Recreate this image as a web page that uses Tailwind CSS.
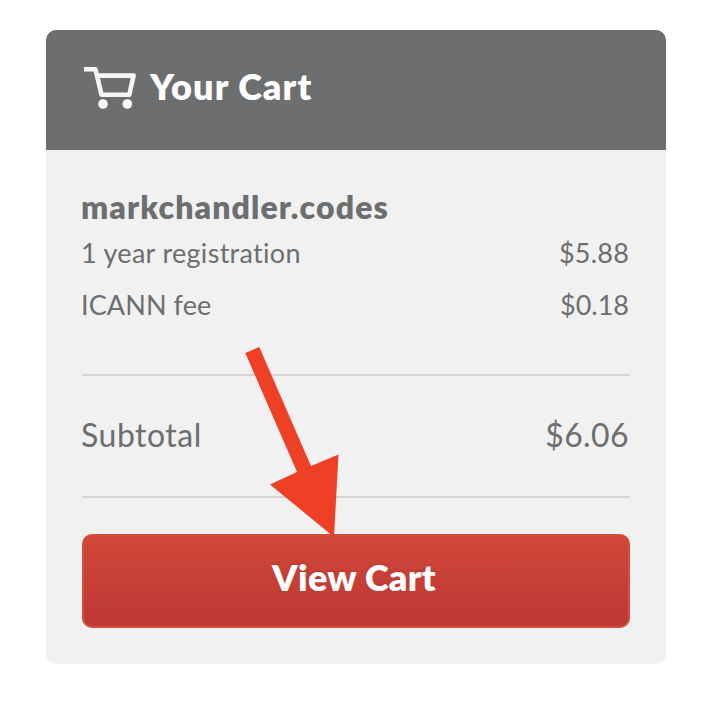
<!DOCTYPE html>
<html lang="en">
<head>
<meta charset="utf-8">
<title>Your Cart</title>
<script src="https://cdn.jsdelivr.net/npm/@tailwindcss/browser@4"></script>
</head>
<body class="bg-white font-['Lato',sans-serif] text-[#6d6e70] [font-variant-ligatures:none]">
<main class="h-[714px] w-[710px] overflow-hidden pt-[30px] pl-[46px]">
  <section class="relative h-[634px] w-[620px] overflow-hidden rounded-[10px] bg-[#f1f1f1]">
    <header class="flex h-[120px] items-start bg-[#6d6e70] pt-9 pl-[37px] text-white">
      <svg class="h-[43px] w-[54px] shrink-0 blur-[0.6px]" viewBox="0 0 54 43" fill="none" stroke="#fff" stroke-opacity=".94" stroke-width="4.6">
        <path d="M1 3.200H12.500L18.500 28.700H46.300L50.600 9.600H14.500" stroke-linejoin="round"/>
        <circle cx="20" cy="38" r="4.800" fill="#fff" stroke="none"/>
        <circle cx="44.3" cy="38" r="4.800" fill="#fff" stroke="none"/>
      </svg>
      <h1 class="ml-[13px] text-[36px] leading-[41px] font-extrabold tracking-[1.100px] whitespace-nowrap">Your Cart</h1>
    </header>
    <div class="px-9 pt-9">
      <h2 class="-ml-px h-10 text-[32px] leading-[42px] font-extrabold tracking-[1.100px]"><span>markchandler.codes</span></h2>
      <div class="-ml-px mr-px flex h-[52px] justify-between text-[27px] leading-[53px]"><span class="tracking-[0.3px]">1 year registration</span><span class="tracking-[0.2px]">$5.88</span></div>
      <div class="-ml-px mr-px flex h-[52px] justify-between text-[27px] leading-[53px]"><span class="tracking-[0.1px]">ICANN fee</span><span>$0.18</span></div>
      <div class="mt-11 flex h-[124px] justify-between border-y-2 border-[#d4d4d4] text-[32px] leading-[118px]"><span class="-ml-px tracking-[0.5px]">Subtotal</span><span class="mr-px tracking-[0.4px]">$6.06</span></div>
      <button class="mt-9 block h-[94px] w-full rounded-[10px] border-2 border-[#d24e3a] bg-linear-to-b from-[#d04838] to-[#be3735] pr-1 pb-2 text-[36px] leading-[80px] font-extrabold tracking-[0.3px] text-white [text-shadow:0_-1px_2px_#a82d2b80]">View Cart</button>
    </div>
    <svg class="absolute top-[315px] left-[194px] h-[195px] w-[106px]" viewBox="240 345 106 195">
      <path d="M245.300 353L259.300 347L311 466L338.500 454.500L334 537L270 484.500L297 472Z" fill="#ed4025"/>
    </svg>
  </section>
</main>
</body>
</html>
